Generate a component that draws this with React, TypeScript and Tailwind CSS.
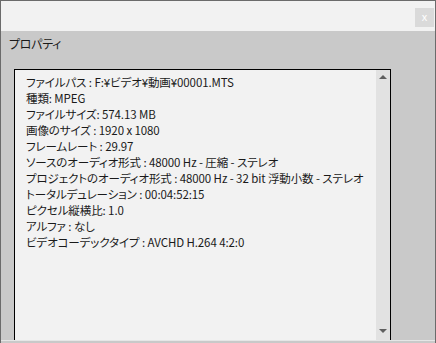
import React from "react";

const rows: string[] = [
  "ファイルパス : F:¥ビデオ¥動画¥00001.MTS",
  "種類: MPEG",
  "ファイルサイズ: 574.13 MB",
  "画像のサイズ : 1920 x 1080",
  "フレームレート : 29.97",
  "ソースのオーディオ形式 : 48000 Hz - 圧縮 - ステレオ",
  "プロジェクトのオーディオ形式 : 48000 Hz - 32 bit 浮動小数 - ステレオ",
  "トータルデュレーション : 00:04:52:15",
  "ピクセル縦横比: 1.0",
  "アルファ : なし",
  "ビデオコーデックタイプ : AVCHD H.264 4:2:0",
];

function App() {
  return (
    <div
      className="w-[436px] h-[343px] flex flex-col bg-[#c9c9c9] border-x border-[#6b6b6b] overflow-hidden text-[#1a1a1a] [font-feature-settings:'palt']"
      style={{ fontFamily: '"Noto Sans CJK JP", "Noto Sans", sans-serif' }}
    >
      {/* title bar */}
      <div className="h-[31px] shrink-0 bg-[#f2f2f2] border-t border-[#6b6b6b] flex justify-end items-start pt-[7px] pr-[1px]">
        <div className="w-[19px] h-[19px] bg-[#dadada] flex items-center justify-center text-white text-[11px] leading-none pb-[2px]">
          x
        </div>
      </div>

      {/* body */}
      <div className="flex-1 flex flex-col">
        <div className="h-[38px] shrink-0 pl-[8px] pt-[5px] text-[12px] leading-[16px] tracking-[-0.3px]">
          プロパティ
        </div>

        <div className="flex-1 flex ml-[13px] w-[377px] border-l border-t border-r border-black bg-[#f2f2f2]">
          <div className="flex-1 pl-[11px] pt-[4px] text-[11.5px] leading-[16px] whitespace-nowrap tracking-[-0.1px]">
            {rows.map((r, i) => (
              <div key={i}>{r}</div>
            ))}
          </div>
          <div className="w-[14px] bg-[#e2e2e2] flex flex-col justify-between items-center pt-[5px] pb-[7px]">
            <div className="w-0 h-0 border-x-[4px] border-x-transparent border-b-[4px] border-b-[#5f5f5f]" />
            <div className="w-0 h-0 border-x-[4px] border-x-transparent border-t-[4px] border-t-[#5f5f5f]" />
          </div>
        </div>
        <div className="h-[1px] bg-[#e6e6e6]" />
        <div className="h-[2px]" />
      </div>
    </div>
  );
}

export default App;
